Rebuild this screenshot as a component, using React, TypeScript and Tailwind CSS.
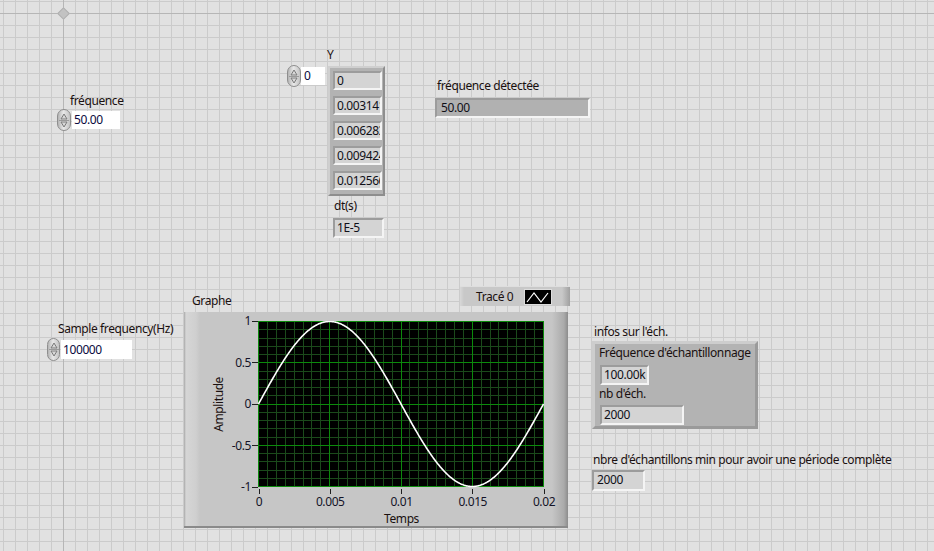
import React from "react";

function Inc({ className }: { className: string }) {
  return (
    <div
      className={
        "flex shrink-0 flex-col items-center justify-center rounded-[7px] border border-[#8e8e8e] bg-[linear-gradient(to_right,#b4b4b4,#e8e8e8_45%,#c4c4c4)] " +
        className
      }
    >
      <svg width="8" height="7" viewBox="0 0 8 7" className="block">
        <path d="M4 1 L7 6 L1 6 Z" fill="#d8d8d8" stroke="#7a7a7a" strokeWidth="1" />
      </svg>
      <div className="h-px w-[10px] bg-[#9a9a9a]" />
      <svg width="8" height="7" viewBox="0 0 8 7" className="block">
        <path d="M4 6 L7 1 L1 1 Z" fill="#d8d8d8" stroke="#7a7a7a" strokeWidth="1" />
      </svg>
    </div>
  );
}

function Label({ className = "", children }: { className?: string; children: React.ReactNode }) {
  return <div className={"whitespace-nowrap text-[12px] leading-[16px] text-[#1a1010] " + className}>{children}</div>;
}

function Rec({ className, children }: { className: string; children: React.ReactNode }) {
  return (
    <div
      className={
        "shrink-0 overflow-hidden whitespace-nowrap border-2 border-t-[#9c9c9c] border-l-[#9c9c9c] border-r-[#f4f4f4] border-b-[#f4f4f4] pl-[2px] text-[12px] leading-[15px] text-[#101018] " +
        className
      }
    >
      {children}
    </div>
  );
}

export default function App() {
  const W = 285;
  const H = 165;
  const pts: string[] = [];
  for (let i = 0; i <= 500; i++) {
    const t = (i / 500) * 0.02;
    const x = (i / 500) * W + 0.5;
    const y = ((1 - Math.sin(2 * Math.PI * 50 * t)) / 2) * H + 0.5;
    pts.push(`${x.toFixed(2)},${y.toFixed(2)}`);
  }
  const minorH: number[] = [];
  for (let i = 0; i <= 20; i++) minorH.push(Math.round((i * H) / 20) + 0.5);
  const minorV: number[] = [];
  for (let i = 0; i <= 32; i++) minorV.push(Math.round((i * W) / 32) + 0.5);
  const majorH = [0, 1, 2, 3, 4].map((i) => Math.round((i * H) / 4) + 0.5);
  const majorV = [0, 1, 2, 3, 4].map((i) => Math.round((i * W) / 4) + 0.5);

  const yTicks = ["1", "0.5", "0", "-0.5", "-1"];
  const xTicks = ["0", "0.005", "0.01", "0.015", "0.02"];
  const yValues = ["0", "0.003141", "0.006283", "0.009424", "0.012566"];

  return (
    <div className="relative h-[551px] w-[934px] overflow-hidden bg-[#e1e1e1] font-['Noto_Sans',sans-serif] tracking-[-0.4px] bg-[linear-gradient(to_right,#cbcbcb_1px,transparent_1px),linear-gradient(to_bottom,#cbcbcb_1px,transparent_1px)] bg-size-[12px_12px] bg-position-[3px_1px]">
      {/* origin lines */}
      <div className="absolute left-[63px] top-0 h-[551px] w-px bg-[#b6b6b6]" />
      <div className="absolute left-0 top-[13px] h-px w-[934px] bg-[#b6b6b6]" />
      <div className="absolute left-[59px] top-[9px] h-[9px] w-[9px] rotate-45 border border-[#b0b0b0] bg-[#c2c2c2]" />

      {/* fréquence */}
      <div className="absolute left-[57px] top-[93px] flex flex-col items-start">
        <Label className="ml-[13px]">fréquence</Label>
        <div className="flex items-center">
          <Inc className="h-[22px] w-[14px]" />
          <div className="ml-[1px] h-[18px] w-[48px] bg-white pl-[2px] text-[12px] leading-[18px] text-[#0a0a40]">50.00</div>
        </div>
      </div>

      {/* Y array */}
      <div className="absolute left-[287px] top-[47px] flex items-start">
        <div className="mt-[18px] flex items-start">
          <Inc className="h-[22px] w-[14px]" />
          <div className="mt-[2px] h-[18px] w-[24px] bg-white pl-[3px] text-[12px] leading-[18px] text-[#0a0a40]">0</div>
        </div>
        <div className="ml-[3px] flex flex-col items-start">
          <Label className="-ml-[1px]">Y</Label>
          <div className="mt-[3px] flex w-[57px] flex-col gap-[6px] border-2 border-t-[#cfcfcf] border-l-[#cfcfcf] border-r-[#8e8e8e] border-b-[#8e8e8e] bg-[#b3b3b3] pb-[4px] pl-[3px] pr-[1px] pt-[3px]">
            {yValues.map((v) => (
              <Rec key={v} className="h-[19px] w-[49px] bg-[#d4d4d4]">
                {v}
              </Rec>
            ))}
          </div>
          <Label className="ml-[6px] mt-[2px]">dt(s)</Label>
          <Rec className="ml-[5px] mt-[4px] h-[20px] w-[51px] bg-[#d4d4d4]">1E-5</Rec>
        </div>
      </div>

      {/* fréquence détectée */}
      <div className="absolute left-[435px] top-[78px] flex flex-col items-start">
        <Label className="ml-[2px]">fréquence détectée</Label>
        <Rec className="mt-[4px] h-[20px] w-[155px] bg-[#b1b1b1] pl-[4px]">50.00</Rec>
      </div>

      {/* Sample frequency */}
      <div className="absolute left-[47px] top-[321px] flex flex-col items-start">
        <Label className="ml-[11px]">Sample frequency(Hz)</Label>
        <div className="mt-[1px] flex items-center">
          <Inc className="h-[23px] w-[13px]" />
          <div className="ml-[1px] h-[19px] w-[71px] bg-white pl-[2px] text-[12px] leading-[19px] text-[#0a0a40]">100000</div>
        </div>
      </div>

      {/* Graphe */}
      <div className="absolute left-[184px] top-[293px] flex flex-col items-start">
        <Label className="ml-[8px]">Graphe</Label>
        <div className="mt-[3px] flex h-[216px] w-[384px] items-start border-b-2 border-b-[#8a8a8a] bg-[linear-gradient(to_right,#a8a8a8_0px,#d6d6d6_2px,#cfcfcf_12px,#c6c6c6_16px,#c6c6c6_calc(100%_-_16px),#aaaaaa_calc(100%_-_4px),#8c8c8c_100%)] pt-[9px]">
          <div className="ml-[26px] flex h-[166px] w-[18px] items-center justify-center">
            <div className="rotate-180 whitespace-nowrap text-[12px] leading-[18px] text-[#1a1010] [writing-mode:vertical-rl]">Amplitude</div>
          </div>
          <div className="flex h-[166px] w-[30px] flex-col justify-between">
            {yTicks.map((t) => (
              <div key={t} className="flex h-0 items-center justify-end">
                <span className="text-[12px] leading-[16px] text-[#141428]">{t}</span>
                <div className="ml-[1px] h-px w-[6px] bg-[#202020]" />
              </div>
            ))}
          </div>
          <div className="flex flex-col items-center">
            <svg width="287" height="167" viewBox="0 0 287 167" className="block">
              <rect x="0" y="0" width="286" height="166" fill="#000" />
              {minorH.map((y, i) => (
                <line key={"mh" + i} x1="0" x2="286" y1={y} y2={y} stroke="#1b4a1b" strokeWidth="1" />
              ))}
              {minorV.map((x, i) => (
                <line key={"mv" + i} x1={x} x2={x} y1="0" y2="166" stroke="#1b4a1b" strokeWidth="1" />
              ))}
              {majorH.map((y, i) => (
                <line key={"MH" + i} x1="0" x2="286" y1={y} y2={y} stroke="#0b8a0b" strokeWidth="1" />
              ))}
              {majorV.map((x, i) => (
                <line key={"MV" + i} x1={x} x2={x} y1="0" y2="166" stroke="#0b8a0b" strokeWidth="1" />
              ))}
              <polyline points={pts.join(" ")} fill="none" stroke="#ffffff" strokeWidth="1.6" />
            </svg>
            <div className="-mt-px flex w-[286px] justify-between">
              {xTicks.map((t) => (
                <div key={t} className="flex w-px flex-col items-center">
                  <div className="mt-[2px] h-[5px] w-px shrink-0 bg-[#202020]" />
                  <span className="whitespace-nowrap text-[12px] leading-[16px] text-[#141428]">{t}</span>
                </div>
              ))}
            </div>
            <Label className="mt-[1px]">Temps</Label>
          </div>
        </div>
      </div>

      {/* legend */}
      <div className="absolute left-[460px] top-[286px] flex h-[20px] w-[110px] items-center border-t border-t-[#dedede] bg-[linear-gradient(to_right,#d8d8d8_0px,#c8c8c8_4px,#c8c8c8_calc(100%_-_8px),#a0a0a0_100%)] pl-[16px]">
        <Label>Tracé 0</Label>
        <svg className="ml-auto mr-[18px] block" width="28" height="16" viewBox="0 0 28 16">
          <rect x="0.5" y="0.5" width="27" height="15" fill="#000" stroke="#dddddd" strokeWidth="1" />
          <path d="M3 13 L10 4 L17 13 L24 4" fill="none" stroke="#fff" strokeWidth="1.2" />
        </svg>
      </div>

      {/* infos sur l'éch. */}
      <div className="absolute left-[592px] top-[324px] flex flex-col items-start">
        <Label className="ml-[2px]">infos sur l'éch.</Label>
        <div className="mt-[1px] flex h-[88px] w-[166px] flex-col items-start border-[3px] border-t-[#cdcdcd] border-l-[#cdcdcd] border-r-[#9a9a9a] border-b-[#9a9a9a] bg-[#b3b3b3] pl-[4px] pt-[1px]">
          <Label>Fréquence d'échantillonnage</Label>
          <Rec className="ml-[1px] mt-[4px] h-[20px] w-[49px] bg-[#d4d4d4]">100.00k</Rec>
          <Label className="mt-[1px]">nb d'éch.</Label>
          <Rec className="ml-[1px] mt-[3px] h-[20px] w-[84px] bg-[#d4d4d4]">2000</Rec>
        </div>
      </div>

      {/* nbre */}
      <div className="absolute left-[593px] top-[452px] flex flex-col items-start">
        <Label>nbre d'échantillons min pour avoir une période complète</Label>
        <Rec className="-ml-[1px] mt-[2px] h-[21px] w-[53px] bg-[#d4d4d4] pl-[3px]">2000</Rec>
      </div>
    </div>
  );
}
